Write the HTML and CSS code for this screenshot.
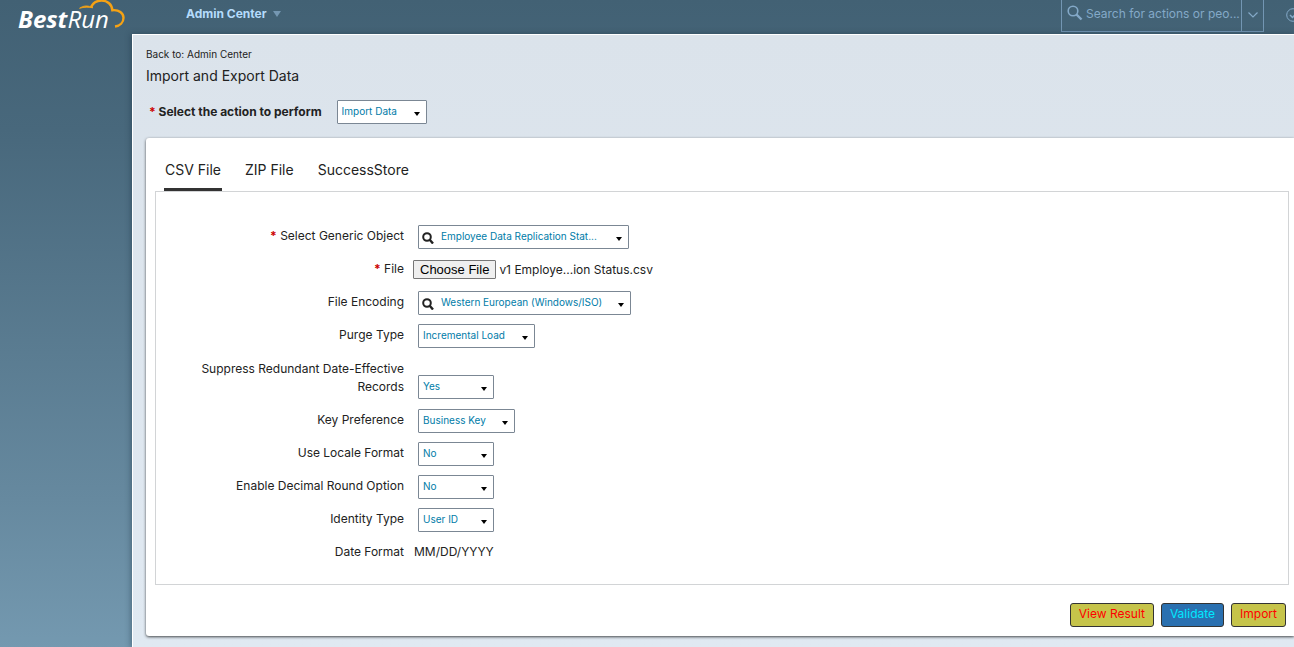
FILE: index.html
```html
<!DOCTYPE html>
<html lang="en">
<head>
    <meta charset="utf-8">
    <title>Import and Export Data</title>
    <link rel="stylesheet" href="styles.css">
</head>
<body>
    <header class="top-bar">
        <a href="#" class="logo">
            <span class="logo-text"><b>Best</b>Run</span>
            <svg class="logo-cloud" viewBox="0 0 48 30" width="48" height="30">
                <path d="M0.500 8.300 C5 5.200 9 5.300 14 7.800 C10 7 5 7 0.500 8.300 Z" fill="#f5a214" stroke="#f5a214" stroke-width="0.800"/>
                <path d="M12 7.500 C14 2.500 18 0.600 22.500 0.600 C28.500 0.600 33 4.500 33.300 10.200 C40 9.500 44.500 13 44.500 17.800 C44.500 22.500 41 25.800 36 26.500" fill="none" stroke="#f5a214" stroke-width="2.400"/>
            </svg>
        </a>
        <button type="button" class="module-menu">Admin Center</button>
        <form class="search">
            <svg class="search-icon" viewBox="0 0 16 16" width="16" height="16">
                <circle cx="6" cy="6" r="4.800" fill="none" stroke="currentColor" stroke-width="1.600"/>
                <path d="M9.500 9.500 L14.500 14.500" stroke="currentColor" stroke-width="2.400"/>
            </svg>
            <input type="text" aria-label="Search" placeholder="Search for actions or peo...">
            <button type="button" class="search-more" aria-label="Search options">
                <svg viewBox="0 0 10 6" width="10" height="6">
                    <path d="M0.500 0.500 L5 5 L9.500 0.500" fill="none" stroke="currentColor" stroke-width="1.200"/>
                </svg>
            </button>
        </form>
        <a href="#" class="todo" aria-label="To-do">
            <svg viewBox="0 0 14 14" width="14" height="14">
                <circle cx="7" cy="7" r="6.300" fill="none" stroke="currentColor"/>
                <path d="M4 7 L6.500 9.500 L11 4.500" fill="none" stroke="currentColor" stroke-width="1.500"/>
            </svg>
        </a>
    </header>

    <main class="content">
        <a href="#" class="back-link">Back to: Admin Center</a>
        <h1>Import and Export Data</h1>

        <div class="action-row">
            <label for="action"><span class="required">*</span> Select the action to perform</label>
            <span class="select w-90">
                <select id="action"><option>Import Data</option><option>Export Data</option></select>
            </span>
        </div>

        <section class="card">
            <nav class="tabs">
                <a href="#" class="tab active">CSV File</a>
                <a href="#" class="tab">ZIP File</a>
                <a href="#" class="tab">SuccessStore</a>
            </nav>

            <form class="panel">
                <div class="row">
                    <label for="generic-object"><span class="required">*</span> Select Generic Object</label>
                    <span class="select searchable w-211">
                        <svg class="glass" viewBox="0 0 12 12" width="12" height="12">
                            <circle cx="5" cy="5" r="3.800" fill="none" stroke="#222" stroke-width="2"/>
                            <path d="M7.500 7.500 L11 11.500" stroke="#222" stroke-width="2.400"/>
                        </svg>
                        <select id="generic-object"><option>Employee Data Replication Stat...</option></select>
                    </span>
                </div>
                <div class="row">
                    <label for="file"><span class="required">*</span> File</label>
                    <span class="file-field">
                        <input type="file" id="file" class="file-input" accept=".csv" tabindex="-1">
                        <button type="button" class="choose-file">Choose File</button>
                        <span class="file-name">v1 Employe...ion Status.csv</span>
                    </span>
                </div>
                <div class="row">
                    <label for="encoding">File Encoding</label>
                    <span class="select searchable w-213">
                        <svg class="glass" viewBox="0 0 12 12" width="12" height="12">
                            <circle cx="5" cy="5" r="3.800" fill="none" stroke="#222" stroke-width="2"/>
                            <path d="M7.500 7.500 L11 11.500" stroke="#222" stroke-width="2.400"/>
                        </svg>
                        <select id="encoding"><option>Western European (Windows/ISO)</option></select>
                    </span>
                </div>
                <div class="row">
                    <label for="purge">Purge Type</label>
                    <span class="select w-117">
                        <select id="purge"><option>Incremental Load</option><option>Full Purge</option></select>
                    </span>
                </div>
                <div class="row tall">
                    <label for="suppress">Suppress Redundant Date-Effective Records</label>
                    <span class="select w-76">
                        <select id="suppress"><option>Yes</option><option>No</option></select>
                    </span>
                </div>
                <div class="row">
                    <label for="key-pref">Key Preference</label>
                    <span class="select w-97">
                        <select id="key-pref"><option>Business Key</option></select>
                    </span>
                </div>
                <div class="row">
                    <label for="locale">Use Locale Format</label>
                    <span class="select w-76">
                        <select id="locale"><option>No</option><option>Yes</option></select>
                    </span>
                </div>
                <div class="row">
                    <label for="round">Enable Decimal Round Option</label>
                    <span class="select w-76">
                        <select id="round"><option>No</option><option>Yes</option></select>
                    </span>
                </div>
                <div class="row">
                    <label for="identity">Identity Type</label>
                    <span class="select w-76">
                        <select id="identity"><option>User ID</option></select>
                    </span>
                </div>
                <div class="row">
                    <span class="row-label">Date Format</span>
                    <span class="value">MM/DD/YYYY</span>
                </div>
            </form>

            <div class="buttons">
                <button type="button" class="btn">View Result</button>
                <button type="button" class="btn primary">Validate</button>
                <button type="button" class="btn">Import</button>
            </div>
        </section>
    </main>

    <script>
        const fileInput = document.getElementById('file');

        document.querySelector('.choose-file').addEventListener('click', () => fileInput.click());

        fileInput.addEventListener('change', () => {
            if (fileInput.files.length) {
                document.querySelector('.file-name').textContent = fileInput.files[0].name;
            }
        });
    </script>
</body>
</html>
```
FILE: styles.css
```css
* {
    box-sizing: border-box;
}
body {
    margin: 0;
    min-height: 100vh;
    display: flex;
    flex-direction: column;
    overflow-x: hidden;
    font-family: Inter, "Liberation Sans", sans-serif;
    font-size: 12px;
    line-height: 18px;
    color: #222;
    background: linear-gradient(#426174, #48687c 20%, #66899f 77%, #7499b0);
}
a {
    color: inherit;
    text-decoration: none;
}
button {
    font-family: inherit;
    cursor: pointer;
}

/* Top bar */
.top-bar {
    display: flex;
    align-items: flex-start;
    height: 34px;
    color: #84a9c8;
}
.logo {
    position: relative;
    width: 186px;
    height: 34px;
    padding: 7px 0 0 18px;
    color: #fff;
}
.logo-text {
    font: italic 400 24px/24px "Open Sans", sans-serif;
}
.logo-text b {
    font-weight: 700;
}
.logo-cloud {
    position: absolute;
    left: 79px;
    top: 0;
}
.module-menu {
    display: flex;
    align-items: center;
    gap: 6px;
    padding: 4px 0;
    border: none;
    background: none;
    font-size: 12px;
    line-height: 20px;
    font-weight: 700;
    color: #b5dbfb;
}
.module-menu::after {
    content: "";
    border: 4px solid transparent;
    border-top: 6px solid #7597b2;
    border-bottom: none;
}
.search {
    display: flex;
    align-items: center;
    width: 203px;
    height: 32px;
    margin-left: auto;
    padding: 0 0 4px 5px;
    border: 1px solid #7396b3;
    border-top: none;
}
.search input {
    flex: 1;
    min-width: 0;
    padding: 0 0 0 3px;
    border: none;
    outline: none;
    background: none;
    font: inherit;
    color: inherit;
}
.search input::placeholder {
    color: inherit;
}
.search-icon {
    margin-bottom: 2px;
}
.search-more {
    width: 22px;
    height: 31px;
    margin-bottom: -4px;
    padding: 0 0 6px;
    border: none;
    border-left: 1px solid #7396b3;
    background: none;
    color: inherit;
}
.todo {
    flex: none;
    width: 8px;
    margin-left: 22px;
    padding-top: 8px;
    overflow: hidden;
}
.todo svg {
    display: block;
}

/* Page */
.content {
    flex: 1;
    margin-left: 132px;
    padding: 11px 0 12px 13px;
    border-top: 1px solid #fff;
    border-left: 1px solid #fff;
    background: linear-gradient(#dbe3eb, #e0e9f2);
    box-shadow: -1px 0 6px rgba(20, 40, 60, 0.4);
}
.back-link {
    display: block;
    font-size: 10px;
    line-height: 16px;
}
h1 {
    margin: 4px 0 13px;
    font-size: 14px;
    line-height: 20px;
    font-weight: 400;
}
.action-row {
    display: flex;
    align-items: center;
    gap: 15px;
    height: 26px;
    padding-left: 3px;
    margin-bottom: 13px;
    font-weight: 700;
}
.required {
    font-weight: 700;
    color: #c00;
}
.card {
    padding: 10px 5px 9px 9px;
    border-radius: 3px 0 0 3px;
    background: #fff;
    box-shadow: 0 1px 3px rgba(0, 0, 0, 0.7);
}
.tabs {
    display: flex;
    gap: 22px;
    padding-left: 9px;
}
.tab {
    padding: 12px 1px 8px;
    border-bottom: 3px solid transparent;
    font-size: 14px;
    line-height: 20px;
}
.tab.active {
    border-color: #333;
}

/* Form */
.panel {
    padding: 28px 0 15px;
    border: 1px solid #d2d4d6;
}
.row {
    display: grid;
    grid-template-columns: 248px 1fr;
    column-gap: 14px;
    align-items: center;
    height: 33px;
}
.row.tall {
    height: auto;
    padding: 8px 0 5px;
    align-items: end;
}
.row label,
.row-label {
    padding: 0 0 2px 40px;
    text-align: right;
}
.row.tall label {
    padding-bottom: 3px;
}
.value {
    margin-left: -4px;
    padding-bottom: 2px;
}
.select {
    position: relative;
    display: inline-block;
    height: 24px;
}
.select select {
    appearance: none;
    display: block;
    width: 100%;
    height: 100%;
    padding: 0 18px 2px 4px;
    border: 1px solid #7b8794;
    border-radius: 1px;
    background: #fff;
    font: 10px/16px Inter, sans-serif;
    color: #007ca8;
}
.select::after {
    content: "";
    position: absolute;
    right: 7px;
    bottom: 8px;
    border: 3px solid transparent;
    border-top: 4px solid #000;
    border-bottom: none;
    pointer-events: none;
}
.select.searchable select {
    padding-left: 22px;
}
.glass {
    position: absolute;
    left: 4px;
    top: 7px;
    pointer-events: none;
}
.w-76 { width: 76px; }
.w-90 { width: 90px; }
.w-97 { width: 97px; }
.w-117 { width: 117px; }
.w-211 { width: 211px; }
.w-213 { width: 213px; }
.file-field {
    display: flex;
    align-items: center;
    gap: 3px;
    margin-left: -5px;
    position: relative;
}
.file-input {
    position: absolute;
    width: 1px;
    height: 1px;
    opacity: 0;
}
.choose-file {
    padding: 0 6px;
    border: 1px solid #767676;
    border-radius: 1px;
    background: #efefef;
    font: 13px/17px "Liberation Sans", sans-serif;
    color: #000;
}

/* Actions */
.buttons {
    display: flex;
    justify-content: flex-end;
    gap: 7px;
    padding: 18px 3px 0;
}
.btn {
    padding: 0 8px 2px;
    border: 1px solid #333;
    border-radius: 3px;
    background: #c6c44a;
    font-size: 12px;
    line-height: 20px;
    color: #f00;
}
.btn.primary {
    background: #2a70b0;
    color: #00e8ff;
}
```
